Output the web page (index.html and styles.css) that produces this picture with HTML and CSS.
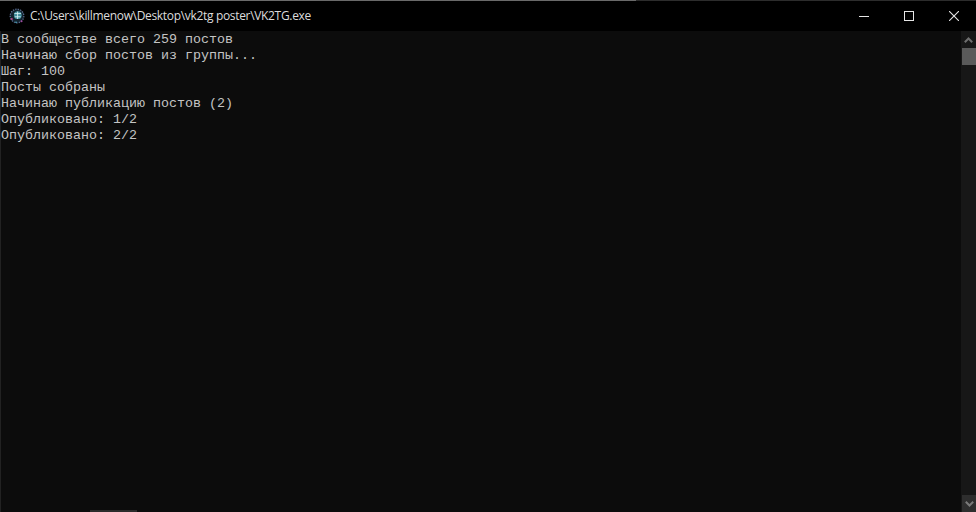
FILE: index.html
```html
<!DOCTYPE html>
<html lang="ru">
<head>
<meta charset="utf-8">
<title>VK2TG</title>
<link rel="stylesheet" href="styles.css">
</head>
<body>
<div class="window">
  <div class="topline"><div class="topline-lit"></div></div>
  <header class="titlebar">
    <svg class="app-icon" viewBox="0 0 16 16" width="16" height="16">
      <circle cx="8" cy="8" r="6.8" fill="#12222e" stroke="#56688a" stroke-width="1.3" stroke-dasharray="1.4 1.1"/>
      <circle cx="8.8" cy="7.2" r="3.9" fill="#3f8b9b"/>
      <path d="M5.4 5.6h6.6M5.8 8.8h6M8.6 3.6v7.4" stroke="#d2eef2" stroke-width=".9"/>
      <circle cx="2.8" cy="11" r="1" fill="#c0408f"/>
      <circle cx="12.5" cy="13.2" r="1" fill="#a04a9f"/>
      <circle cx="7" cy="14.2" r=".8" fill="#4fb6c9"/>
    </svg>
    <span class="title">C:\Users\killmenow\Desktop\vk2tg poster\VK2TG.exe</span>
    <div class="controls">
      <div class="ctl"><svg viewBox="0 0 10 10" width="10" height="10"><path d="M0 5.5h10" stroke="#e6e6e6" stroke-width="1"/></svg></div>
      <div class="ctl"><svg viewBox="0 0 10 10" width="10" height="10"><rect x=".5" y=".5" width="9" height="9" fill="none" stroke="#e6e6e6" stroke-width="1"/></svg></div>
      <div class="ctl"><svg viewBox="0 0 10 10" width="10" height="10"><path d="M0 0l10 10M10 0L0 10" stroke="#e6e6e6" stroke-width="1.1"/></svg></div>
    </div>
  </header>
  <div class="body">
    <pre class="console">В сообществе всего 259 постов
Начинаю сбор постов из группы...
Шаг: 100
Посты собраны
Начинаю публикацию постов (2)
Опубликовано: 1/2
Опубликовано: 2/2</pre>
    <div class="scrollbar">
      <div class="arrow"><svg viewBox="0 0 9 6" width="9" height="6"><path d="M.8 5.2L4.5 1.5l3.7 3.7" fill="none" stroke="#6e6e6e" stroke-width="2"/></svg></div>
      <div class="thumb"></div>
      <div class="track"></div>
      <div class="arrow arrow-down"><svg viewBox="0 0 9 6" width="9" height="6"><path d="M.8.8l3.7 3.7L8.2.8" fill="none" stroke="#7a7a7a" stroke-width="2"/></svg></div>
    </div>
    <div class="bottom-sliver"></div>
  </div>
</div>
</body>
</html>
```
FILE: styles.css
```css
* { box-sizing: border-box; }
html, body { margin: 0; height: 100%; background: #0c0c0c; overflow: hidden; }
.window { display: flex; flex-direction: column; width: 976px; height: 512px; }
.topline { height: 1px; flex: none; background: #2c2c2c; }
.topline-lit { width: 636px; height: 1px; background: #6a6a6a; }
.titlebar { display: flex; align-items: center; height: 30px; flex: none; background: #000; padding-left: 9px; }
.app-icon { flex: none; }
.title { margin-left: 5px; font: 12px/16px "Open Sans", "Liberation Sans", sans-serif; color: #dcdcdc; white-space: nowrap; letter-spacing: -.325px; }
.controls { display: flex; margin-left: auto; }
.ctl { width: 45px; height: 30px; display: flex; align-items: center; justify-content: center; }
.body { flex: 1; display: flex; min-height: 0; position: relative; }
.console { flex: 1; margin: 0; padding: 1px 0 0 1px; font: 13.33px/16px "Liberation Mono", monospace; color: #c4c4c4; background: #0c0c0c; border-left: 1px solid #222; margin-left: 0; padding-left: 0; }
.scrollbar { flex: none; width: 15px; display: flex; flex-direction: column; background: #171717; }
.arrow { height: 17px; flex: none; display: flex; align-items: center; justify-content: center; }
.arrow-down { background: #2e2e2e; margin-top: auto; margin-left: 1px; }
.thumb { height: 17px; flex: none; background: #5a5a5a; margin-left: 1px; }
.track { flex: 1; }
.bottom-sliver { position: absolute; left: 90px; bottom: 0; width: 47px; height: 2px; background: #2b2b2b; }
```
